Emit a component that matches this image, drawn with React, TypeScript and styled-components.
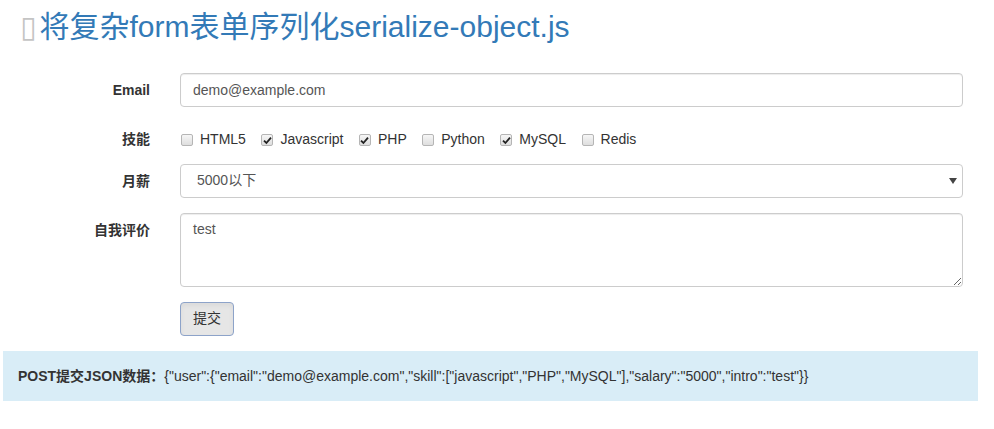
import { createGlobalStyle } from 'styled-components';
import styled from 'styled-components';

const GlobalStyle = createGlobalStyle`
  body {
    margin: 0;
    background: #fff;
    color: #333;
    font-family: "Liberation Sans", Arial, "Noto Sans CJK SC", sans-serif;
    font-size: 14px;
    line-height: 1.42857;
  }
  * {
    box-sizing: border-box;
  }
`;

const Page = styled.div`
  width: 994px;
`;

const Title = styled.h2`
  margin: 0;
  padding: 10px 20px 0;
  height: 58px;
  font-size: 30px;
  font-weight: normal;
  line-height: 33px;
  color: #337ab7;
  font-family: "Liberation Sans", Arial, "Noto Sans CJK SC", sans-serif;
`;

const Tofu = styled.span`
  color: #c4c4c4;
  font-family: "DejaVu Sans", sans-serif;
  font-size: 30px;
  margin-right: 3px;
`;

const Form = styled.form`
  display: grid;
  grid-template-columns: 150px 1fr;
  column-gap: 30px;
  row-gap: 15px;
  padding: 15px 31px 0 0;
`;

const Label = styled.label`
  text-align: right;
  font-weight: bold;
  padding-top: 7px;
  line-height: 20px;
  color: #333;
`;

const TextInput = styled.input`
  display: block;
  width: 100%;
  height: 34px;
  padding: 6px 12px;
  font: inherit;
  color: #555;
  border: 1px solid #ccc;
  border-radius: 4px;
  box-shadow: inset 0 1px 1px rgba(0, 0, 0, 0.075);
  outline: none;
`;

const CheckRow = styled.div`
  display: flex;
  gap: 14.5px;
  padding-top: 8px;
  height: 27px;
`;

const CheckLabel = styled.label`
  display: flex;
  align-items: center;
  gap: 7px;
  height: 20px;
  padding-left: 1px;
  color: #333;
  cursor: pointer;
`;

const Box = styled.span<{ $on: boolean }>`
  display: inline-flex;
  align-items: center;
  justify-content: center;
  width: 12px;
  height: 12px;
  border: 1px solid #b5b5b5;
  border-radius: 2px;
  background: linear-gradient(#f6f6f6, #dedede);
  color: #222;
`;

const SelectWrap = styled.div`
  position: relative;
`;

const Select = styled.select`
  display: block;
  width: 100%;
  height: 34px;
  padding: 6px 12px 6px 16px;
  font: inherit;
  color: #555;
  background: #fff;
  border: 1px solid #ccc;
  border-radius: 4px;
  appearance: none;
  outline: none;
`;

const Caret = styled.span`
  position: absolute;
  right: 6px;
  top: 14px;
  width: 0;
  height: 0;
  border-left: 4px solid transparent;
  border-right: 4px solid transparent;
  border-top: 6px solid #444;
  pointer-events: none;
`;

const TextArea = styled.textarea`
  display: block;
  width: 100%;
  height: 74px;
  padding: 6px 12px;
  font: inherit;
  color: #555;
  border: 1px solid #ccc;
  border-radius: 4px;
  box-shadow: inset 0 1px 1px rgba(0, 0, 0, 0.075);
  outline: none;
`;

const Button = styled.button`
  width: 54px;
  height: 34px;
  padding: 6px 12px;
  font: inherit;
  color: #333;
  background: #e6e6e6;
  border: 1px solid #8da3c9;
  border-radius: 4px;
  box-shadow: inset 0 3px 5px rgba(0, 0, 0, 0.05);
  cursor: pointer;
`;

const Alert = styled.div`
  margin: 15px 16px 0 3px;
  padding: 15px;
  background: #d9edf7;
  color: #333;
  line-height: 20px;
`;

const Strong = styled.strong`
  font-weight: bold;
`;

const skills = [
  { name: 'HTML5', on: false },
  { name: 'Javascript', on: true },
  { name: 'PHP', on: true },
  { name: 'Python', on: false },
  { name: 'MySQL', on: true },
  { name: 'Redis', on: false },
];

const Check = () => (
  <svg width="9" height="9" viewBox="0 0 9 9" aria-hidden="true">
    <path d="M1 4.6 L3.4 7 L8 1.6" fill="none" stroke="#222" strokeWidth="1.8" />
  </svg>
);

export default function App() {
  return (
    <Page>
      <GlobalStyle />
      <Title>
        <Tofu>▯</Tofu>将复杂form表单序列化serialize-object.js
      </Title>
      <Form onSubmit={(e) => e.preventDefault()}>
        <Label>Email</Label>
        <TextInput defaultValue="demo@example.com" />

        <Label>技能</Label>
        <CheckRow>
          {skills.map((s) => (
            <CheckLabel key={s.name}>
              <Box $on={s.on}>{s.on && <Check />}</Box>
              {s.name}
            </CheckLabel>
          ))}
        </CheckRow>

        <Label>月薪</Label>
        <SelectWrap>
          <Select defaultValue="5000">
            <option value="5000">5000以下</option>
          </Select>
          <Caret />
        </SelectWrap>

        <Label>自我评价</Label>
        <TextArea defaultValue="test" />

        <span />
        <div>
          <Button type="submit">提交</Button>
        </div>
      </Form>
      <Alert>
        <Strong>POST提交JSON数据：</Strong>
        {'{"user":{"email":"demo@example.com","skill":["javascript","PHP","MySQL"],"salary":"5000","intro":"test"}}'}
      </Alert>
    </Page>
  );
}
